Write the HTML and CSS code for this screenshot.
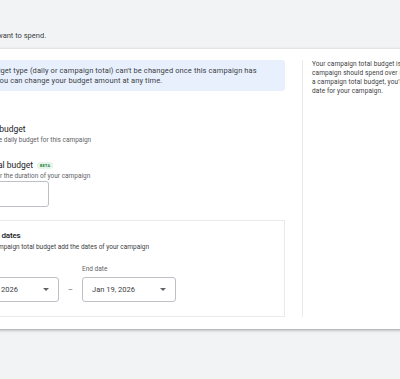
FILE: index.html
```html
<!DOCTYPE html>
<html lang="en">
<head>
    <meta charset="UTF-8">
    <title>Budget</title>
    <link rel="stylesheet" href="styles.css">
</head>
<body>
    <div class="page">
        <p class="intro">Decide how much you want to spend.</p>

        <div class="card">
            <div class="main">
                <div class="notice">
                    <span class="notice-icon">i</span>
                    <p>Your budget type (daily or campaign total) can't be changed once this campaign has begun. You can change your budget amount at any time.</p>
                </div>

                <div class="options">
                    <div class="option">
                        <span class="radio"></span>
                        <div>
                            <div class="option-title">Average daily budget</div>
                            <div class="option-sub">Choose an average daily budget for this campaign</div>
                        </div>
                    </div>
                    <div class="option">
                        <span class="radio checked"></span>
                        <div>
                            <div class="option-title">Campaign total budget <span class="beta">BETA</span></div>
                            <div class="option-sub">Set your budget for the duration of your campaign</div>
                            <div class="amount"></div>
                        </div>
                    </div>
                </div>

                <div class="dates">
                    <div class="dates-title">Campaign dates</div>
                    <div class="dates-sub">To use a campaign total budget add the dates of your campaign</div>
                    <div class="date-row">
                        <div class="field">
                            <span class="field-label">Start date</span>
                            <div class="select">Jan 12, 2026<span class="caret"></span></div>
                        </div>
                        <span class="dash">–</span>
                        <div class="field">
                            <span class="field-label">End date</span>
                            <div class="select">Jan 19, 2026<span class="caret"></span></div>
                        </div>
                    </div>
                </div>
            </div>

            <aside class="side">
                <p>Your campaign total budget is the amount your<br>
                campaign should spend over its duration. When you set<br>
                a campaign total budget, you'll need to add an end<br>
                date for your campaign.</p>
            </aside>
        </div>
    </div>
</body>
</html>
```

FILE: styles.css
```css
* {
    box-sizing: border-box;
    margin: 0;
    padding: 0;
}

body {
    background: #f1f3f4;
    font-family: Roboto, "Liberation Sans", sans-serif;
    color: #202124;
    overflow: hidden;
    height: 379px;
}

/* the view is scrolled to the right, so the page starts off screen */
.page {
    margin-left: -76px;
    width: 600px;
    padding-top: 31px;
}

.intro {
    font-size: 7.5px;
    line-height: 10px;
    color: #3c4043;
    margin: 0 0 8px -2px;
}

.card {
    background: #fff;
    display: flex;
    padding: 11px 12px 12px;
    box-shadow: 0 1px 2px rgba(60, 64, 67, 0.3), 0 1px 3px 1px rgba(60, 64, 67, 0.15);
}

.main {
    width: 349px;
    flex-shrink: 0;
}

.notice {
    display: flex;
    align-items: flex-start;
    gap: 12px;
    background: #e8f0fe;
    border-radius: 3px;
    padding: 6px 10px 5px;
}

.notice-icon {
    width: 12px;
    height: 12px;
    border-radius: 50%;
    background: #1a73e8;
    color: #fff;
    font-size: 8px;
    line-height: 12px;
    text-align: center;
    flex-shrink: 0;
}

.notice p {
    font-size: 7.5px;
    line-height: 10px;
    letter-spacing: 0.1px;
    color: #3c4043;
    padding-right: 8px;
}

.options {
    margin-top: 33px;
    display: flex;
    flex-direction: column;
    gap: 15px;
}

.option {
    display: flex;
    gap: 2px;
}

.radio {
    width: 9px;
    height: 9px;
    border: 1.5px solid #5f6368;
    border-radius: 50%;
    margin-top: 1px;
    flex-shrink: 0;
}

.radio.checked {
    border-color: #1a73e8;
    box-shadow: inset 0 0 0 1.5px #fff, inset 0 0 0 5px #1a73e8;
}

.option-title {
    font-size: 8.5px;
    line-height: 11px;
    display: flex;
    align-items: center;
    gap: 4px;
}

.beta {
    background: #e6f4ea;
    color: #188038;
    font-size: 3.8px;
    font-weight: 700;
    letter-spacing: 0.2px;
    line-height: 7px;
    padding: 0 3px;
    border-radius: 3px;
}

.option-sub {
    font-size: 6.5px;
    line-height: 9px;
    margin-top: 1px;
    color: #5f6368;
}

.amount {
    width: 102px;
    height: 26px;
    border: 1px solid #bdc1c6;
    border-radius: 3px;
}

.dates {
    margin: 13px 0 0 14px;
    border: 1px solid #e8eaed;
    padding: 9px 14px 14px;
}

.dates-title {
    font-size: 8px;
    font-weight: 500;
    line-height: 11px;
    letter-spacing: -0.2px;
}

.dates-sub {
    font-size: 6.5px;
    line-height: 10px;
    margin-top: 1px;
    color: #3c4043;
}

.date-row {
    display: flex;
    align-items: flex-end;
    gap: 8px;
    margin-top: 13px;
}

.field {
    display: flex;
    flex-direction: column;
    gap: 3px;
}

.field-label {
    font-size: 6.5px;
    line-height: 9px;
    color: #5f6368;
}

.select {
    width: 94px;
    height: 25px;
    border: 1px solid #bdc1c6;
    border-radius: 3px;
    padding: 0 9px;
    display: flex;
    align-items: center;
    justify-content: space-between;
    font-size: 7.5px;
    color: #3c4043;
}

.caret {
    border-left: 3px solid transparent;
    border-right: 3px solid transparent;
    border-top: 3px solid #5f6368;
}

.dash {
    width: 7px;
    line-height: 25px;
    font-size: 7.5px;
    color: #5f6368;
    text-align: center;
}

.side {
    margin-left: 17px;
    border-left: 1px solid #e8eaed;
    padding-left: 9px;
    width: 210px;
}

.side p {
    font-size: 6.5px;
    line-height: 9px;
    letter-spacing: 0.1px;
    color: #3c4043;
    white-space: nowrap;
}
```
